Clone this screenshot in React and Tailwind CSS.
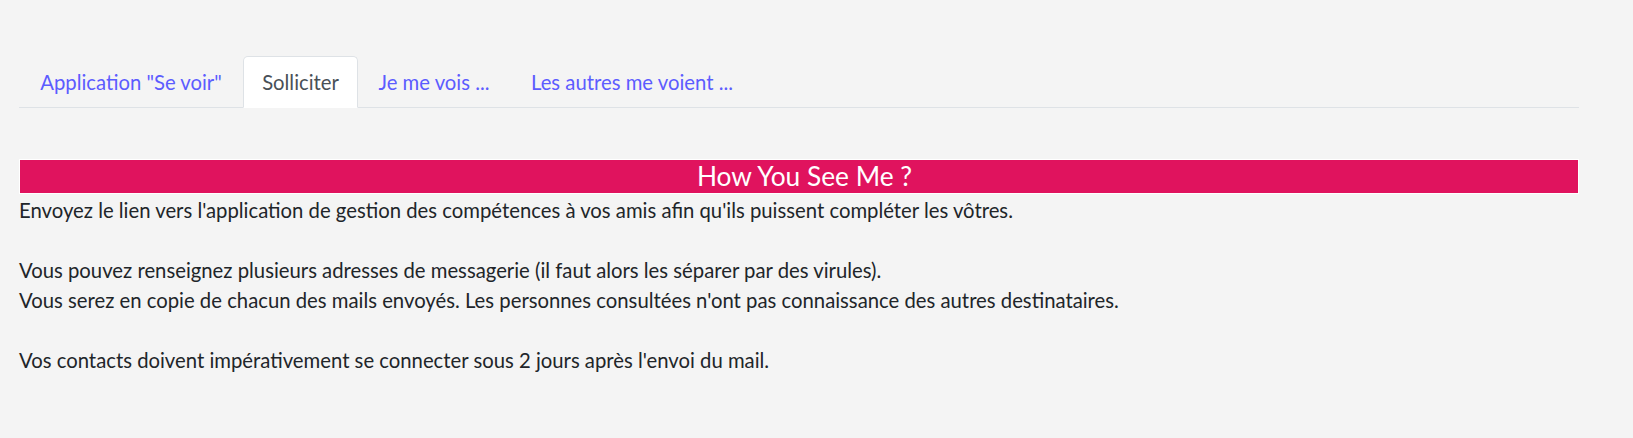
export default function App() {
  const tabs = [
    { label: 'Application "Se voir"', w: "w-[224px]", active: false },
    { label: "Solliciter", w: "w-[115px]", active: true },
    { label: "Je me vois ...", w: "w-[152px]", active: false },
    { label: "Les autres me voient ...", w: "w-[244px]", active: false },
  ];
  return (
    <div
      className="min-h-screen bg-[#f4f4f4] pl-[19px] pt-[56px] text-[#212529]"
      style={{ fontFamily: "Lato, 'Open Sans', sans-serif" }}
    >
      <div className="w-[1560px]">
        <ul className="flex border-b border-[#dee2e6]">
          {tabs.map((t) => (
            <li key={t.label} className={`-mb-px ${t.w}`}>
              <a
                className={
                  t.active
                    ? "block rounded-t-[5px] border border-[#dee2e6] border-b-white bg-white py-[10px] text-center text-[20.3px] leading-[30px] text-[#495057]"
                    : "block border border-transparent py-[10px] text-center text-[20.3px] leading-[30px] text-[#5c5cff]"
                }
              >
                {t.label}
              </a>
            </li>
          ))}
        </ul>
        <div className="mt-[51px]">
          <div className="h-[35px] border border-white bg-[#e0135e] pl-[11px] text-center text-[26.3px] leading-[33px] text-white">
            How You See Me ?
          </div>
          <div className="pt-[1px] text-[20.3px] leading-[30px]">
            <p>Envoyez le lien vers l'application de gestion des compétences à vos amis afin qu'ils puissent compléter les vôtres.</p>
            <p>&nbsp;</p>
            <p>Vous pouvez renseignez plusieurs adresses de messagerie (il faut alors les séparer par des virules).</p>
            <p>Vous serez en copie de chacun des mails envoyés. Les personnes consultées n'ont pas connaissance des autres destinataires.</p>
            <p>&nbsp;</p>
            <p>Vos contacts doivent impérativement se connecter sous 2 jours après l'envoi du mail.</p>
          </div>
        </div>
      </div>
    </div>
  );
}
